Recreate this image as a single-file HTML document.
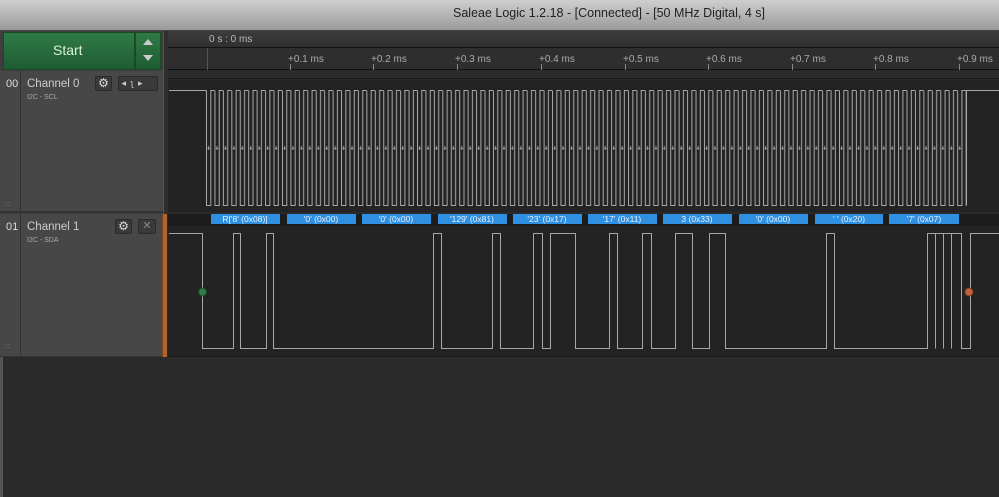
<!DOCTYPE html>
<html><head><meta charset="utf-8"><style>
body{margin:0;width:999px;height:497px;overflow:hidden;background:#2a2a2a;font-family:"Liberation Sans",sans-serif;position:relative}
div{position:absolute;box-sizing:border-box}
.t{font-size:11px;color:#ddd}
.btn{background:#3a3a3a;border:1px solid #2a2a2a;border-radius:2px}
</style></head><body>
<div style="left:0;top:0;width:999px;height:31px;background:linear-gradient(#cfcfcf,#9a9a9a);border-bottom:1px solid #444"></div>
<div style="left:453px;top:6px;font-size:12.5px;color:#222;white-space:nowrap">Saleae Logic 1.2.18 - [Connected] - [50 MHz Digital, 4 s]</div>
<div style="left:0;top:31px;width:164px;height:326px;background:#3e3e3e"></div>
<div style="left:3px;top:32px;width:132px;height:38px;background:linear-gradient(#2f7a45,#1f5c33);border:1px solid #184a28"></div>
<div style="left:135px;top:32px;width:26px;height:38px;background:linear-gradient(#2f7a45,#1f5c33);border:1px solid #184a28"></div>
<div style="left:53px;top:42px;font-size:14px;color:#d8f0d8">Start</div>
<div style="left:143px;top:39px;width:0;height:0;border-left:5px solid transparent;border-right:5px solid transparent;border-bottom:6px solid #ccc"></div>
<div style="left:143px;top:55px;width:0;height:0;border-left:5px solid transparent;border-right:5px solid transparent;border-top:6px solid #ccc"></div>
<div style="left:0;top:71px;width:163px;height:142px;background:#474747;border-bottom:2px solid #333"></div>
<div style="left:20px;top:71px;width:1px;height:142px;background:#333"></div>
<div style="left:0;top:214px;width:163px;height:143px;background:#474747;border-bottom:1px solid #333"></div>
<div style="left:20px;top:214px;width:1px;height:143px;background:#333"></div>
<div class="t" style="left:6px;top:78px">00</div><div class="t" style="left:27px;top:78px;font-size:11.5px;color:#ccc">Channel 0</div>
<div style="left:27px;top:94px;font-size:7px;color:#aaa">I2C - SCL</div>
<div class="t" style="left:6px;top:221px">01</div><div class="t" style="left:27px;top:221px;font-size:11.5px;color:#ccc">Channel 1</div>
<div style="left:27px;top:237px;font-size:7px;color:#aaa">I2C - SDA</div>
<div class="btn" style="left:95px;top:76px;width:17px;height:15px;color:#ddd;font-size:12px;text-align:center;line-height:13px">⚙</div>
<div class="btn" style="left:118px;top:76px;width:40px;height:15px;color:#ccc;font-size:9px;line-height:13px">&nbsp;◂ &nbsp;ʅ&nbsp; ▸</div>
<div class="btn" style="left:115px;top:219px;width:17px;height:15px;color:#ddd;font-size:12px;text-align:center;line-height:13px">⚙</div>
<div class="btn" style="left:138px;top:219px;width:18px;height:15px;color:#888;font-size:11px;text-align:center;line-height:13px">✕</div>
<div style="left:4px;top:202px;font-size:6px;color:#888">::::</div>
<div style="left:4px;top:344px;font-size:6px;color:#888">::::</div>
<div style="left:0;top:357px;width:3px;height:140px;background:#555"></div>
<div style="left:163px;top:31px;width:5px;height:183px;background:#2e2e2e;border-left:1px solid #555"></div>
<div style="left:162px;top:214px;width:5px;height:143px;background:#b0642c;border-left:1px solid #7a4018"></div>
<div style="left:168px;top:31px;width:831px;height:17px;background:linear-gradient(#3c3c3c,#303030);border-bottom:1px solid #111"></div>
<div style="left:168px;top:48px;width:831px;height:22px;background:#2e2e2e;border-bottom:1px solid #111"></div>
<div style="left:168px;top:71px;width:831px;height:8px;background:#2b2b2b;border-bottom:1px solid #1a1a1a"></div>
<div style="left:209px;top:34px;font-size:10px;color:#bbb">0 s : 0 ms</div>
<div style="left:207px;top:48px;width:1px;height:22px;background:#555"></div>
<div style="left:0;top:0;width:999px;height:497px">
<svg width="999" height="497" style="position:absolute;left:0;top:0">
<defs>
<pattern id="clk" patternUnits="userSpaceOnUse" x="206" y="0" width="8.44" height="300">
<path d="M0.5,90.5 V205.5 H4.8 V90.5 H8.44" fill="none" stroke="#a8a8a8" stroke-width="1"/>
<path d="M1.5,148.5 H3.8 M2.6,146 V150" stroke="#999" stroke-width="1"/>
</pattern>
</defs>
<rect x="168" y="80" width="831" height="132" fill="#232323"/>
<rect x="168" y="214" width="831" height="12" fill="#1c1c1c"/>
<rect x="168" y="226" width="831" height="130" fill="#232323"/>
<g fill="#888">
<rect x="290" y="64" width="1" height="6"/><rect x="373" y="64" width="1" height="6"/><rect x="457" y="64" width="1" height="6"/><rect x="541" y="64" width="1" height="6"/><rect x="625" y="64" width="1" height="6"/><rect x="708" y="64" width="1" height="6"/><rect x="792" y="64" width="1" height="6"/><rect x="875" y="64" width="1" height="6"/><rect x="959" y="64" width="1" height="6"/>
</g>
<g font-family="Liberation Sans" font-size="10" fill="#aaa">
<text x="288" y="62">+0.1 ms</text><text x="371" y="62">+0.2 ms</text><text x="455" y="62">+0.3 ms</text><text x="539" y="62">+0.4 ms</text><text x="623" y="62">+0.5 ms</text><text x="706" y="62">+0.6 ms</text><text x="790" y="62">+0.7 ms</text><text x="873" y="62">+0.8 ms</text><text x="957" y="62">+0.9 ms</text>
</g>
<path d="M169,90.5 H206.5" stroke="#a8a8a8" fill="none"/>
<rect x="206" y="85" width="760" height="125" fill="url(#clk)"/>
<path d="M966.5,205.5 V90.5 H999" stroke="#a8a8a8" fill="none"/>
<g fill="#2f8fe0">
<rect x="211" y="214" width="69" height="10"/><rect x="287" y="214" width="69" height="10"/><rect x="362" y="214" width="69" height="10"/><rect x="438" y="214" width="69" height="10"/><rect x="513" y="214" width="69" height="10"/><rect x="588" y="214" width="69" height="10"/><rect x="663" y="214" width="69" height="10"/><rect x="739" y="214" width="69" height="10"/><rect x="815" y="214" width="68" height="10"/><rect x="889" y="214" width="70" height="10"/>
</g>
<g font-family="Liberation Sans" font-size="8.5" fill="#e8f2ff" text-anchor="middle">
<text x="245" y="222">R['8' (0x08)]</text><text x="321" y="222">'0' (0x00)</text><text x="396" y="222">'0' (0x00)</text><text x="472" y="222">'129' (0x81)</text><text x="547" y="222">'23' (0x17)</text><text x="622" y="222">'17' (0x11)</text><text x="697" y="222">3 (0x33)</text><text x="773" y="222">'0' (0x00)</text><text x="849" y="222">' ' (0x20)</text><text x="924" y="222">'7' (0x07)</text>
</g>
<path d="M169,233.5 H202.5 V348.5 H233.5 V233.5 H240.5 V348.5 H266.5 V233.5 H273.5 V348.5 H433.5 V233.5 H441.5 V348.5 H492.5 V233.5 H500.5 V348.5 H533.5 V233.5 H542.5 V348.5 H550.5 V233.5 H575.5 V348.5 H609.5 V233.5 H617.5 V348.5 H642.5 V233.5 H651.5 V348.5 H675.5 V233.5 H692.5 V348.5 H709.5 V233.5 H725.5 V348.5 H826.5 V233.5 H834.5 V348.5 H927.5 V233.5 H961.5 V348.5 H970.5 V233.5 H999 M935.5,233.5 V348.5 M943.5,233.5 V348.5 M951.5,233.5 V348.5" stroke="#a8a8a8" fill="none"/>
<circle cx="202.5" cy="292" r="4" fill="#2f7a4a" stroke="#1a4a2a"/>
<circle cx="969" cy="292" r="4" fill="#c0603c" stroke="#7a3a20"/>
<rect x="168" y="356" width="831" height="1" fill="#1a1a1a"/>
</svg>
</div>
</body></html>
